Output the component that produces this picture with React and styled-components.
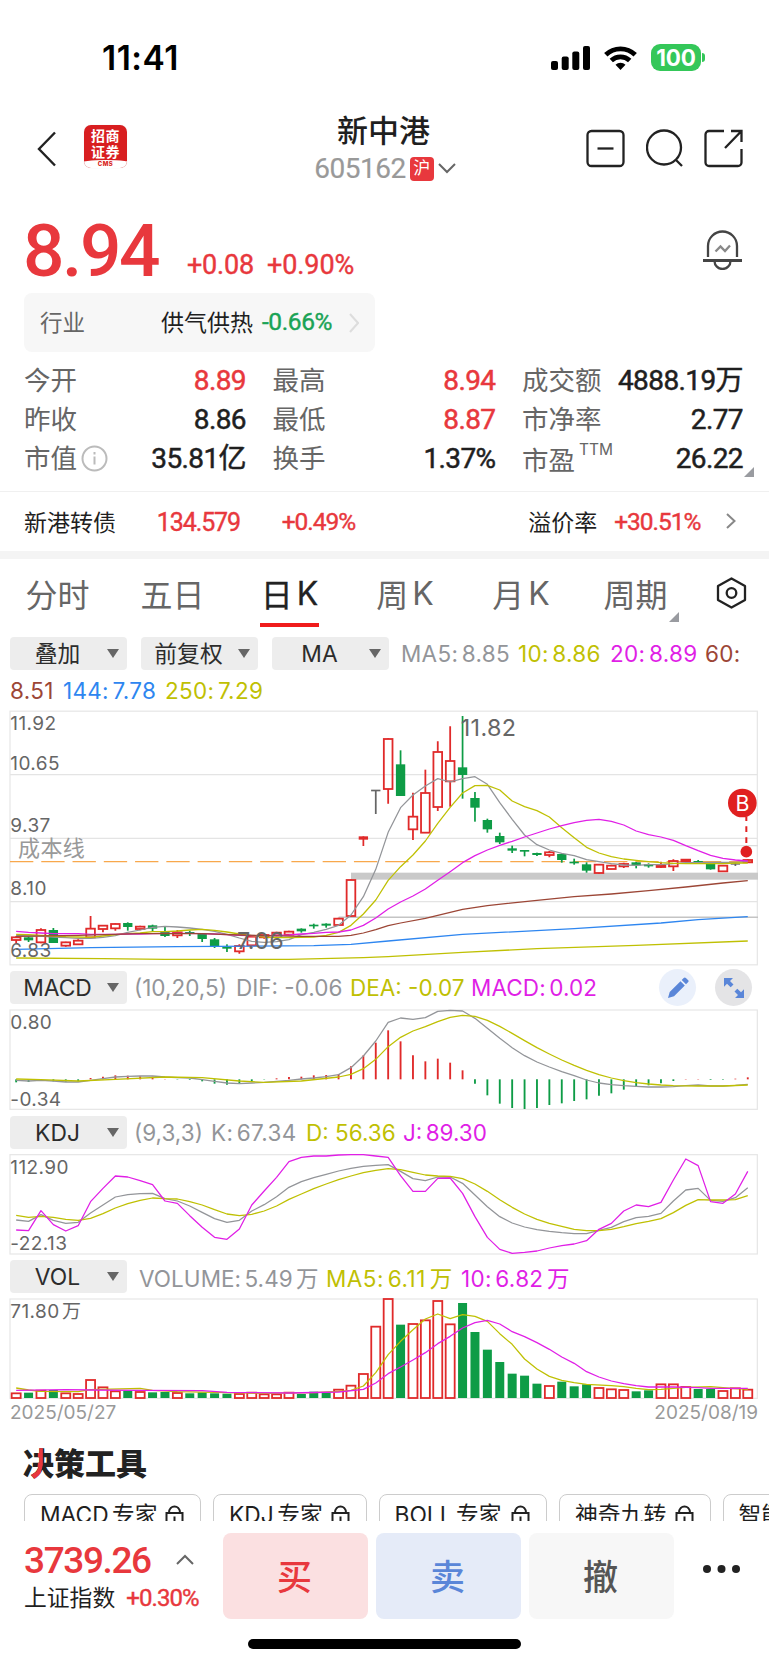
import React from "react";
import styled, { createGlobalStyle, css } from "styled-components";

const RED = "#e8383d";
const UP = "#e02a2a";
const DOWN = "#0e9c46";
const GRAY = "#939599";
const OLIVE = "#bfc003";
const PINK = "#e01fe6";
const BROWN = "#9c4636";
const BLUE = "#2e86f0";

const GlobalStyle = createGlobalStyle`
    * {
        box-sizing: border-box;
    }

    body {
        margin: 0;
        background: #fff;
        font-family: Inter, "Noto Sans CJK SC", sans-serif;
        color: #1f1f1f;
    }

    svg {
        display: block;
        flex: none;
    }
`;

const Page = styled.div`
    width: 769px;
    height: 1665px;
    overflow: hidden;
    background: #fff;
    display: flex;
    flex-direction: column;
    white-space: nowrap;
`;

const Num = styled.span`
    font-family: Roboto, "Noto Sans CJK SC", sans-serif;
    font-size: ${({ $size }) => $size || 25}px;
    font-weight: ${({ $weight }) => $weight || 400};
    letter-spacing: ${({ $track }) => $track || 0}px;
    color: ${({ $color }) => $color || "#1f1f1f"};
    -webkit-text-stroke: ${({ $stroke = 0.4 }) => $stroke}px currentColor;
    line-height: 1;
    padding-top: ${({ $drop }) => $drop || 0}px;
`;

/* status bar */

const StatusBar = styled.div`
    height: 100px;
    padding: 15px 64px 0 102px;
    display: flex;
    align-items: center;
`;

const Clock = styled.div`
    flex: 1;
    font-size: 33.5px;
    font-weight: 600;
    letter-spacing: 0.5px;
    color: #000;
`;

const StatusIcons = styled.div`
    display: flex;
    align-items: center;
    gap: 14px;
`;

const Battery = styled.div`
    display: flex;
    align-items: center;
    gap: 1px;
`;

const BatteryBody = styled.div`
    width: 50px;
    height: 27px;
    border-radius: 9px;
    background: #34c759;
    color: #fff;
    font-size: 22.5px;
    font-weight: 700;
    letter-spacing: -0.2px;
    line-height: 27px;
    text-align: center;
`;

const BatteryTip = styled.div`
    width: 3px;
    height: 9px;
    border-radius: 0 3px 3px 0;
    background: #34c759;
`;

/* title bar */

const Header = styled.div`
    height: 100px;
    padding: 0 26px 4px 37px;
    display: grid;
    grid-template-columns: 146px 1fr 157px;
    align-items: center;
`;

const HeaderLeft = styled.div`
    display: flex;
    align-items: center;
    gap: 28px;
    padding-top: 1px;
`;

const Logo = styled.div`
    width: 43px;
    height: 43px;
    margin-top: -5px;
    border-radius: 7px;
    background: #d81e20;
    overflow: hidden;
    display: flex;
    flex-direction: column;
    align-items: center;
    box-shadow: 0 0 1px #ddd;
    color: #fff;
    font-size: 14px;
    font-weight: 700;
    line-height: 16px;
    letter-spacing: 0.5px;
    padding-top: 3px;
`;

const LogoFoot = styled.div`
    width: 52px;
    height: 10px;
    border-radius: 50% 50% 0 0 / 3px 3px 0 0;
    background: #fff;
    color: #d81e20;
    font-size: 6px;
    font-weight: 800;
    line-height: 8px;
    text-align: center;
`;

const StockTitle = styled.div`
    display: flex;
    flex-direction: column;
    align-items: center;
    padding-left: 1px;
`;

const StockName = styled.div`
    font-size: 31px;
    font-weight: 500;
    line-height: 38px;
    margin: -3px 0 6px;
    padding-right: 3px;
`;

const StockCode = styled.div`
    display: flex;
    align-items: center;
    height: 25px;
    gap: 4px;
`;

const Market = styled.span`
    width: 24px;
    height: 24px;
    border-radius: 4px;
    background: ${RED};
    color: #fff;
    font-size: 17px;
    line-height: 23px;
    text-align: center;
`;

const HeaderIcons = styled.div`
    display: flex;
    justify-content: space-between;
    align-items: center;
`;

/* quote */

const PriceRow = styled.div`
    height: 93px;
    padding: 0 27px 0 23px;
    display: flex;
    align-items: flex-start;
`;

const Price = styled(Num)`
    width: 164px;
`;

const Change = styled(Num)`
    width: ${({ $w }) => $w}px;
`;

const BellBox = styled.div`
    margin-left: auto;
    padding-top: 30px;
`;

const Industry = styled.div`
    width: 351px;
    height: 59px;
    margin-left: 24px;
    padding: 0 16px 3px;
    border-radius: 8px;
    background: #f7f7f7;
    display: flex;
    align-items: center;
    font-size: 23px;
`;

const IndustryLabel = styled.span`
    width: 121px;
    color: #666;
    font-size: 22.5px;
`;

const IndustryName = styled.span`
    width: 101px;
`;

const IndustryArrow = styled.span`
    margin-left: auto;
    padding-top: 3px;
`;

const Stats = styled.div`
    height: 139px;
    padding: 9px 25px 0 24px;
    display: grid;
    grid-template-columns: 222px 223px 221px;
    column-gap: 26.5px;
    grid-auto-rows: 39px;
    position: relative;
`;

const Stat = styled.div`
    display: flex;
    align-items: center;
    justify-content: space-between;
`;

const StatLabel = styled.span`
    display: flex;
    align-items: center;
    gap: 4px;
    color: #666;
    font-size: 26.5px;
    line-height: 39px;
    padding-top: ${({ $drop }) => $drop || 0}px;
`;

const Ttm = styled.sup`
    align-self: flex-start;
    font-size: 15.5px;
    line-height: 17px;
`;

const Corner = styled.i`
    position: absolute;
    right: ${({ $right }) => $right}px;
    bottom: ${({ $bottom }) => $bottom}px;
    border-left: 10px solid transparent;
    border-bottom: 10px solid #999ba0;
`;

const BondRow = styled.div`
    height: 60px;
    border-top: 1px solid #f0f0f0;
    padding: 0 33px 2px 24px;
    display: flex;
    align-items: center;
    font-size: 23px;
`;

const BondCell = styled.div`
    width: ${({ $w }) => $w}px;
    display: flex;
    align-items: center;
`;

const Band = styled.div`
    height: 8px;
    background: #f4f4f4;
`;

/* period tabs */

const Tabs = styled.div`
    height: 78px;
    display: grid;
    grid-template-columns: 115px 115px 117px 115px 116px 115px 1fr;
`;

const Tab = styled.div`
    position: relative;
    height: 72px;
    padding: 0 0 4px ${({ $shift }) => $shift || 0}px;
    display: flex;
    align-items: center;
    justify-content: center;
    gap: 4px;
    font-size: 32px;
    color: ${({ $active }) => ($active ? "#222" : "#666")};

    ${({ $active }) =>
        $active &&
        css`
            -webkit-text-stroke: 0.3px currentColor;

            &::after {
                content: "";
                position: absolute;
                left: 30px;
                bottom: 4px;
                width: 59px;
                height: 4px;
                background: #f01c1c;
            }
        `}
`;

/* indicator header rows */

const Toolbar = styled.div`
    height: ${({ $h }) => $h || 33}px;
    margin: ${({ $margin }) => $margin || "6px 0"};
    padding: 0 10px;
    display: flex;
    align-items: center;
`;

const Pill = styled.div`
    width: 117px;
    height: 33px;
    flex: none;
    margin-right: ${({ $mr }) => $mr}px;
    padding: 0 8px 0 7px;
    border-radius: 4px;
    background: #ededed;
    color: #2c2c2c;
    font-size: 22.8px;
    line-height: 33px;
    display: flex;
    align-items: center;

    span {
        flex: 1;
        text-align: center;
        padding-right: 9px;
    }
`;

const Caret = styled.i`
    border: 6px solid transparent;
    border-top: 9px solid #666;
    border-bottom: 0;
`;

const Legend = styled.span`
    width: ${({ $w }) => $w}px;
    flex: none;
    font-size: 22.5px;
    color: ${({ $color }) => $color};

    ${({ $tight, $track = 0.3 }) =>
        $tight &&
        css`
            letter-spacing: ${$track}px;
            word-spacing: -3px;
        `}
`;

const RoundButton = styled.div`
    width: 37px;
    height: 37px;
    flex: none;
    border-radius: 50%;
    background: ${({ $bg }) => $bg};
    margin-left: ${({ $ml }) => $ml};
    margin-right: ${({ $mr }) => $mr || 0}px;
    display: flex;
    align-items: center;
    justify-content: center;
`;

const ChartBox = styled.div`
    flex: none;
    width: 749px;
    height: ${({ $h }) => $h}px;
    margin-left: 9px;

    svg {
        width: 749px;
        height: ${({ $h }) => $h}px;
    }
`;

const Label = styled.text`
    fill: ${({ $fill }) => $fill || "#666"};
    font-size: ${({ $size }) => $size || 57}px;
    letter-spacing: 1.2px;
    word-spacing: -10px;
`;

const Dates = styled.div`
    height: 30px;
    padding: 0 11px 0 10px;
    display: flex;
    justify-content: space-between;
    font-size: 19px;
    line-height: 28px;
    color: #999;
`;

/* tools */

const ToolsTitle = styled.h2`
    margin: 0;
    height: 65px;
    padding: 13px 23px 0;
    font-size: 31px;
    font-weight: 900;
    line-height: 44px;
    color: #222;
`;

const AccentChar = styled.span`
    position: relative;
    display: inline-block;
    height: 44px;
    vertical-align: top;

    &::after {
        content: "决";
        position: absolute;
        left: 0;
        top: 0;
        color: ${RED};
        clip-path: polygon(48% 0, 64% 0, 64% 52%, 57% 72%, 42% 92%, 26% 92%, 26% 74%, 45% 66%, 48% 50%);
    }
`;

const Cards = styled.div`
    height: 27px;
    overflow: hidden;
    padding-left: 24px;
    display: flex;
    gap: 12px;
`;

const Card = styled.div`
    width: ${({ $w }) => $w}px;
    height: 58px;
    flex: none;
    padding: 0 16px 0 15px;
    border: 1px solid #ccc;
    border-radius: 8px;
    font-size: 22.8px;
    line-height: 39px;
    word-spacing: -3px;
    display: flex;
    justify-content: space-between;

    svg {
        margin-top: 10px;
    }
`;

/* bottom bar */

const BottomBar = styled.div`
    height: 98px;
    padding: 12px 28px 0 24px;
    display: flex;
    align-items: flex-start;
    background: #fff;
`;

const Index = styled.div`
    width: 199px;
    height: 86px;
`;

const IndexTop = styled.div`
    display: flex;
    align-items: center;
    height: 53px;
    gap: 25px;
`;

const IndexBottom = styled.div`
    display: flex;
    align-items: center;
    gap: 11px;
    font-size: 22.8px;
    line-height: 20px;
`;

const TradeButton = styled.div`
    width: 145px;
    height: 86px;
    margin-right: 8px;
    padding-right: 2px;
    border-radius: 8px;
    background: ${({ $bg }) => $bg};
    color: ${({ $color }) => $color};
    font-size: 35px;
    font-weight: 500;
    line-height: 89px;
    text-align: center;
`;

const More = styled.div`
    width: 38px;
    margin: 32px 0 0 auto;
`;

const HomeBar = styled.div`
    width: 273px;
    height: 10px;
    margin: 20px 0 0 248px;
    border-radius: 5px;
    background: #000;
`;

/* series are stored in chart units, three per css pixel */

const STEP = 37.2;
const xAt = (i) => 48.5 + STEP * i;

// [up/down, high, body top, body bottom, low]
const CANDLES = [
    ["r", 708, 712, 720, 732], ["g", 708, 713, 720, 726], ["r", 685, 690, 727, 730],
    ["g", 684, 691, 728, 728], ["r", 725, 727, 737, 740], ["r", 718, 722, 733, 735],
    ["r", 648, 686, 712, 714], ["r", 675, 677, 687, 697], ["r", 670, 672, 685, 692],
    ["g", 667, 670, 680, 692], ["r", 677, 680, 687, 691], ["g", 674, 677, 685, 693],
    ["g", 680, 696, 707, 711], ["r", 690, 697, 706, 714], ["g", 692, 697, 700, 708],
    ["g", 700, 702, 716, 726], ["g", 714, 719, 737, 744], ["g", 733, 742, 745, 756],
    ["r", 733, 738, 754, 761], ["r", 705, 710, 736, 738], ["r", 700, 705, 712, 716],
    ["r", 695, 698, 706, 709], ["r", 692, 695, 704, 706], ["g", 685, 687, 693, 698],
    ["g", 671, 675, 678, 686], ["g", 670, 672, 676, 683], ["r", 653, 656, 675, 677],
    ["r", 538, 540, 648, 650], ["f", 409, 410, 418, 438], ["k", 270, 270, 273, 342],
    ["r", 115, 117, 267, 311], ["g", 151, 194, 287, 287], ["r", 278, 350, 388, 420],
    ["r", 209, 279, 398, 398], ["r", 124, 156, 321, 333], ["r", 79, 183, 244, 320],
    ["g", 48, 203, 224, 296], ["g", 276, 295, 322, 365], ["g", 356, 361, 387, 398],
    ["g", 398, 409, 426, 432], ["g", 437, 446, 451, 459], ["g", 450, 451, 454, 469],
    ["g", 458, 460, 464, 468], ["r", 453, 457, 465, 472], ["g", 460, 463, 479, 488],
    ["g", 476, 486, 489, 494], ["g", 487, 494, 511, 518], ["r", 492, 494, 519, 521],
    ["r", 494, 497, 507, 508], ["r", 488, 492, 499, 504], ["g", 486, 488, 495, 505],
    ["g", 490, 494, 498, 503], ["r", 485, 497, 501, 504], ["r", 478, 483, 499, 513],
    ["r", 477, 479, 484, 486], ["g", 480, 484, 487, 490], ["g", 488, 490, 507, 509],
    ["r", 495, 497, 514, 516], ["k", 490, 491, 493, 498], ["r", 478, 480, 487, 489],
];

const MA5 = [706, 708, 708, 711, 713, 715, 715, 712, 707, 697, 690, 682, 679, 681, 684, 688, 694, 703, 714, 724, 727, 725, 719, 704, 697, 688, 676, 645, 590, 508, 397, 323, 285, 258, 236, 246, 236, 230, 253, 308, 358, 405, 434, 450, 460, 467, 479, 485, 491, 495, 496, 494, 494, 491, 488, 488, 487, 487, 487, 484];
const MA10 = [703, 704, 706, 708, 710, 711, 712, 708, 704, 701, 699, 695, 695, 693, 690, 688, 691, 696, 702, 707, 711, 713, 713, 712, 711, 706, 697, 676, 642, 600, 541, 500, 465, 423, 370, 322, 279, 257, 256, 270, 303, 320, 332, 351, 383, 413, 442, 459, 470, 477, 481, 485, 488, 490, 491, 491, 491, 491, 489, 489];
const MA20 = [694, 697, 699, 701, 701, 701, 703, 703, 703, 702, 702, 701, 700, 700, 700, 701, 702, 704, 706, 707, 707, 706, 705, 702, 700, 697, 696, 690, 676, 654, 627, 606, 588, 567, 541, 515, 488, 467, 450, 436, 424, 411, 399, 387, 377, 368, 361, 358, 364, 375, 393, 404, 411, 421, 437, 452, 466, 475, 480, 483];
const MA60 = [[0, 709], [5, 706], [10, 701], [15, 701], [18, 705], [23, 709], [26, 709], [27, 706], [28, 699], [29, 689], [30, 677], [31, 669], [33, 655], [36, 628], [38, 617], [42, 601], [45, 590], [48, 582], [51, 572], [54, 561], [57, 549], [59, 542]];
const MA144 = [[0, 748], [6, 743], [13, 740], [24, 737], [27, 733], [30, 723], [36, 703], [45, 686], [52, 669], [55, 659], [59, 650]];
const MA250 = [[0, 774], [7, 776], [12, 778], [22, 778], [28, 773], [30, 770], [36, 757], [42, 746], [50, 736], [59, 723]];

const MACD_BARS = [367, 366, 360, 364, 365, 364, 354, 350, 346, 347, 349, 350, 357, 359, 360, 364, 371, 374, 371, 364, 359, 355, 351, 350, 346, 345, 342, 319, 286, 248, 211, 244, 286, 304, 296, 308, 331, 371, 406, 431, 444, 447, 444, 435, 430, 423, 418, 407, 400, 389, 381, 376, 370, 363, 357, 357, 360, 359, 356, 352];
const DIF = [361, 363, 361, 363, 366, 366, 361, 356, 351, 349, 348, 348, 351, 353, 354, 359, 364, 369, 371, 369, 367, 364, 361, 357, 354, 350, 344, 323, 288, 243, 187, 174, 178, 173, 154, 151, 153, 175, 205, 235, 263, 287, 306, 321, 335, 347, 360, 369, 374, 377, 379, 381, 381, 380, 377, 375, 378, 378, 376, 373];
const DEA = [[0, 357], [2, 359], [5, 363], [8, 358], [12, 351], [15, 353], [18, 363], [20, 367], [23, 363], [26, 351], [27, 343], [28, 326], [29, 298], [30, 260], [31, 232], [32, 213], [33, 200], [34, 185], [35, 172], [36, 166], [37, 169], [38, 181], [39, 199], [40, 220], [41, 242], [42, 263], [43, 282], [44, 300], [45, 316], [46, 331], [47, 344], [48, 354], [49, 362], [50, 368], [51, 372], [52, 375], [53, 377], [55, 378], [57, 378], [59, 375]];

const K = [780, 784, 764, 781, 790, 787, 759, 735, 711, 704, 701, 700, 716, 723, 738, 757, 776, 787, 781, 753, 734, 710, 682, 665, 653, 643, 633, 625, 619, 616, 614, 634, 656, 662, 651, 651, 670, 705, 740, 770, 789, 801, 809, 814, 818, 821, 821, 811, 802, 785, 773, 769, 760, 723, 690, 685, 721, 724, 713, 683];
const D = [766, 772, 769, 772, 778, 781, 775, 761, 744, 731, 721, 714, 716, 717, 725, 735, 749, 762, 767, 763, 753, 738, 718, 702, 686, 672, 659, 648, 638, 631, 626, 629, 637, 645, 648, 649, 656, 672, 694, 719, 742, 762, 778, 790, 799, 808, 812, 812, 808, 800, 791, 784, 776, 758, 736, 719, 720, 720, 719, 707];
const J = [810, 812, 752, 794, 813, 797, 725, 685, 648, 651, 662, 674, 723, 730, 767, 802, 832, 838, 807, 735, 693, 652, 605, 592, 588, 588, 585, 584, 584, 588, 592, 647, 694, 694, 655, 654, 700, 770, 832, 868, 880, 877, 873, 864, 857, 852, 842, 808, 790, 753, 735, 740, 727, 660, 597, 617, 725, 730, 702, 634];

const VOLS = [611, 609, 603, 601, 611, 613, 571, 593, 605, 604, 607, 608, 607, 610, 611, 608, 611, 612, 613, 609, 614, 614, 609, 613, 606, 608, 600, 588, 553, 411, 328, 405, 403, 392, 334, 404, 340, 427, 480, 517, 552, 558, 582, 589, 576, 590, 584, 595, 599, 601, 605, 602, 584, 584, 592, 598, 598, 604, 596, 600];
const VMA5 = [[0, 595], [1, 601], [2, 605], [5, 606], [6, 600], [10, 596], [11, 602], [13, 606], [16, 608], [20, 611], [24, 609], [26, 605], [27, 602], [28, 589], [29, 549], [30, 495], [31, 455], [32, 420], [33, 388], [34, 373], [35, 387], [36, 375], [37, 380], [38, 395], [39, 432], [40, 464], [41, 508], [42, 538], [43, 560], [44, 572], [45, 579], [46, 584], [48, 588], [49, 591], [50, 596], [51, 600], [52, 599], [53, 596], [54, 593], [56, 591], [57, 594], [59, 599]];
const VMA10 = [[0, 602], [4, 600], [6, 601], [10, 602], [15, 603], [17, 608], [22, 610], [26, 607], [28, 599], [29, 580], [30, 552], [31, 532], [32, 511], [33, 489], [34, 462], [35, 440], [36, 415], [37, 399], [38, 392], [39, 403], [40, 426], [41, 441], [42, 459], [43, 479], [44, 502], [45, 521], [46, 546], [47, 562], [48, 574], [49, 582], [50, 588], [51, 592], [53, 592], [55, 594], [56, 596], [59, 596]];

const Line = ({ data, color, width = 3.8 }) => (
    <polyline
        fill="none"
        stroke={color}
        strokeWidth={width}
        strokeLinejoin="round"
        points={data
            .map((d, i) => (Array.isArray(d) ? `${xAt(d[0])},${d[1]}` : `${xAt(i)},${d}`))
            .join(" ")}
    />
);

const Frame = ({ top, height }) => (
    <rect x="30" y={top} width="2242" height={height} fill="none" stroke="#e6e6e6" strokeWidth="3.6" />
);

const Candle = ({ i, data }) => {
    const [kind, high, top, bottom, low] = data;
    const x = xAt(i);
    if (kind === "r") {
        return (
            <g stroke={UP} strokeWidth="5.4" fill="none">
                <path d={`M${x} ${high}V${top}M${x} ${bottom}V${low}`} />
                <rect x={x - 13} y={top} width="26" height={bottom - top} />
            </g>
        );
    }
    const color = { g: DOWN, f: UP, k: "#666" }[kind];
    return (
        <g fill={color}>
            <rect x={x - 2.6} y={high} width="5.2" height={low - high} />
            <rect x={x - 14} y={top - 1} width="28" height={bottom - top + 2} />
        </g>
    );
};

const PriceChart = () => (
    <ChartBox $h={256}>
        <svg viewBox="27 30 2247 768">
            <path d="M30 224H2274M30 415H2274M30 605H2274" stroke="#e4e4e4" strokeWidth="3.6" />
            <Frame top={33.5} height={761} />
            <path d="M1500 437H2274" stroke="#dcdcdc" strokeWidth="3.6" />
            <rect x="1053" y="518" width="1221" height="21" fill="#c9c9c9" />
            <path d="M1016 652H2274" stroke="#c4c4c4" strokeWidth="4.5" />
            <path d="M30 485H2274" stroke="#f8a84c" strokeWidth="3.6" strokeDasharray="70 23.8" />
            {CANDLES.map((c, i) => (
                <Candle key={i} i={i} data={c} />
            ))}
            <Line data={MA5} color={GRAY} />
            <Line data={MA10} color={OLIVE} />
            <Line data={MA20} color={PINK} />
            <Line data={MA60} color={BROWN} />
            <Line data={MA144} color={BLUE} />
            <Line data={MA250} color={OLIVE} />
            <Label x="31" y="90">11.92</Label>
            <Label x="31" y="209">10.65</Label>
            <Label x="31" y="396">9.37</Label>
            <Label x="31" y="584">8.10</Label>
            <Label x="31" y="771">6.83</Label>
            <Label x="54" y="467" $size={66} $fill="#999">成本线</Label>
            <Label x="711" y="748" $size={70}>7.06</Label>
            <Label x="1382" y="108" $size={70}>11.82</Label>
            <path d="M2239 350V438" stroke="#e02020" strokeWidth="6" strokeDasharray="17 16" strokeDashoffset="4" />
            <circle cx="2227" cy="309" r="43" fill="#e02020" />
            <circle cx="2239" cy="455" r="17.5" fill="#e02020" />
            <Label x="2228" y="333" textAnchor="middle" $size={64} $fill="#fff">B</Label>
        </svg>
    </ChartBox>
);

const MacdChart = () => (
    <ChartBox $h={101}>
        <svg viewBox="27 147 2247 303">
            <Frame top={150} height={298} />
            {MACD_BARS.map((y, i) => (
                <path key={i} d={`M${xAt(i)} 358V${y}`} stroke={y < 358 ? UP : DOWN} strokeWidth="5.6" />
            ))}
            <Line data={DIF} color={GRAY} />
            <Line data={DEA} color={OLIVE} />
            <Label x="31" y="207">0.80</Label>
            <Label x="31" y="437">-0.34</Label>
        </svg>
    </ChartBox>
);

const KdjChart = () => (
    <ChartBox $h={101}>
        <svg viewBox="27 582 2247 303">
            <Frame top={584} height={298} />
            <Line data={K} color={GRAY} />
            <Line data={D} color={OLIVE} />
            <Line data={J} color={PINK} />
            <Label x="31" y="641">112.90</Label>
            <Label x="31" y="871">-22.13</Label>
        </svg>
    </ChartBox>
);

const VolChart = () => (
    <ChartBox $h={101}>
        <svg viewBox="27 325 2247 303">
            <Frame top={328} height={298} />
            {VOLS.map((y, i) =>
                CANDLES[i][0] === "g" ? (
                    <rect key={i} x={xAt(i) - 13.5} y={y} width="27" height={625 - y} fill={DOWN} />
                ) : (
                    <rect key={i} x={xAt(i) - 13.5} y={y} width="27" height={625 - y} fill="none" stroke={UP} strokeWidth="5.4" />
                )
            )}
            <Line data={VMA5} color={OLIVE} />
            <Line data={VMA10} color={PINK} />
            <Label x="31" y="384">71.80 万</Label>
        </svg>
    </ChartBox>
);

const Chevron = ({ w, h, d, color, stroke = 2 }) => (
    <svg width={w} height={h} viewBox={`0 0 ${w} ${h}`} fill="none" stroke={color} strokeWidth={stroke}>
        <path d={d} />
    </svg>
);

const Lock = () => (
    <svg width="19" height="22" viewBox="0 0 19 22" fill="none" stroke="#222" strokeWidth="2">
        <path d="M1.5 8h16v12.5h-16zM4 8C4 3.5 7 1.5 9.5 1.5S15 3.5 15 8M9.5 11.5v5" />
    </svg>
);

const STATS = [
    ["今开", "8.89", RED], ["最高", "8.94", RED], ["成交额", "4888.19万"],
    ["昨收", "8.86"], ["最低", "8.87", RED], ["市净率", "2.77"],
    ["市值", "35.81亿"], ["换手", "1.37%"], ["市盈", "26.22"],
];

const App = () => (
    <Page>
        <GlobalStyle />
        <StatusBar>
            <Clock>11:41</Clock>
            <StatusIcons>
                <svg width="39" height="24" viewBox="0 0 39 24">
                    <rect x="0" y="15" width="7" height="9" rx="2" />
                    <rect x="10.7" y="10.5" width="7" height="13.5" rx="2" />
                    <rect x="21.3" y="5.5" width="7" height="18.5" rx="2" />
                    <rect x="32" y="0" width="7" height="24" rx="2" />
                </svg>
                <svg width="33" height="24" viewBox="0 0 33 24" fill="none" stroke="#000" strokeWidth="4.8">
                    <path d="M1.8 8.8a21 21 0 0 1 29.4 0M7.3 14.6a13.3 13.3 0 0 1 18.4 0" />
                    <path d="M16.5 24l-5-5.2a7.2 7.2 0 0 1 10 0z" fill="#000" stroke="none" />
                </svg>
                <Battery>
                    <BatteryBody>100</BatteryBody>
                    <BatteryTip />
                </Battery>
            </StatusIcons>
        </StatusBar>

        <Header>
            <HeaderLeft>
                <Chevron w={19} h={36} d="M18 1.5L2 18L18 34.5" color="#222" stroke={2.4} />
                <Logo>
                    <span>招商</span>
                    <span>证券</span>
                    <LogoFoot>CMS</LogoFoot>
                </Logo>
            </HeaderLeft>
            <StockTitle>
                <StockName>新中港</StockName>
                <StockCode>
                    <Num $size={28} $color="#999" $track={-0.5} $stroke={0.2}>605162</Num>
                    <Market>沪</Market>
                    <Chevron w={18} h={11} d="M1 1L9 9L17 1" color="#666" />
                </StockCode>
            </StockTitle>
            <HeaderIcons>
                <svg width="39" height="39" viewBox="0 0 39 39" fill="none" stroke="#222" strokeWidth="2.3">
                    <rect x="1.5" y="2" width="36" height="35" rx="4" />
                    <path d="M11.5 19.5h16" />
                </svg>
                <svg width="38" height="39" viewBox="0 0 38 39" fill="none" stroke="#222" strokeWidth="2.3">
                    <circle cx="18" cy="18.5" r="17" />
                    <path d="M29.5 30.5l6.5 6.5" />
                </svg>
                <svg width="39" height="39" viewBox="0 0 39 39" fill="none" stroke="#222" strokeWidth="2.3">
                    <path d="M20 2H5a3.5 3.5 0 0 0-3.5 3.5V33.5A3.5 3.5 0 0 0 5 37H34a3.5 3.5 0 0 0 3.5-3.5V20M27 2h10.5V13M37 2.5L21 19" />
                </svg>
            </HeaderIcons>
        </Header>

        <PriceRow>
            <Price $size={73} $weight={500} $track={-2.4} $color={RED} $stroke={0} $drop={15}>8.94</Price>
            <Change $w={80} $size={27} $track={-0.2} $color={RED} $drop={52}>+0.08</Change>
            <Change $w={90} $size={27} $track={-0.1} $color={RED} $drop={52}>+0.90%</Change>
            <BellBox>
                <svg width="39" height="40" viewBox="0 0 39 40" fill="none" stroke="#444" strokeWidth="2.3">
                    <path d="M5 27V16a14.5 14.5 0 0 1 29 0V27" />
                    <path d="M0 30.5H39" strokeWidth="3" />
                    <path d="M11.5 31a8 8 0 0 0 16 0" />
                    <path d="M12.5 21.5l5-5 4.5 4.5 5-5.5" stroke="#888" />
                </svg>
            </BellBox>
        </PriceRow>

        <Industry>
            <IndustryLabel>行业</IndustryLabel>
            <IndustryName>供气供热</IndustryName>
            <Num $size={24.5} $color="#1aa356" $track={-0.4} $drop={3}>-0.66%</Num>
            <IndustryArrow>
                <Chevron w={10} h={20} d="M1 1L9 10L1 19" color="#ddd" />
            </IndustryArrow>
        </Industry>

        <Stats>
            {STATS.map(([label, value, color]) => (
                <Stat key={label}>
                    <StatLabel $drop={label === "市盈" ? 4 : 0}>
                        {label}
                        {label === "市值" && (
                            <svg width="27" height="27" viewBox="0 0 27 27" fill="none" stroke="#bbb" strokeWidth="2">
                                <circle cx="13.5" cy="13.5" r="12" />
                                <path d="M13.5 11.5v8M13.5 7v2.5" />
                            </svg>
                        )}
                        {label === "市盈" && <Ttm>TTM</Ttm>}
                    </StatLabel>
                    <Num $size={28} $track={-0.6} $stroke={0.5} $color={color}>{value}</Num>
                </Stat>
            ))}
            <Corner $right={15} $bottom={14} />
        </Stats>

        <BondRow>
            <BondCell $w={133}>新港转债</BondCell>
            <BondCell $w={125}>
                <Num $size={25} $color={RED} $track={-1.1} $drop={3}>134.579</Num>
            </BondCell>
            <BondCell $w={247}>
                <Num $size={24.5} $color={RED} $track={-1} $drop={3}>+0.49%</Num>
            </BondCell>
            <BondCell $w={86}>溢价率</BondCell>
            <BondCell $w={112}>
                <Num $size={24.5} $color={RED} $track={-1} $drop={3}>+30.51%</Num>
            </BondCell>
            <Chevron w={10} h={16} d="M1 1L8.5 8L1 15" color="#888" />
        </BondRow>
        <Band />

        <Tabs>
            <Tab>分时</Tab>
            <Tab>五日</Tab>
            <Tab $active $shift={2}>
                日<span>K</span>
            </Tab>
            <Tab $shift={1}>
                周<span>K</span>
            </Tab>
            <Tab $shift={2}>
                月<span>K</span>
            </Tab>
            <Tab>
                周期
                <Corner $right={14} $bottom={9} />
            </Tab>
            <Tab>
                <svg width="31" height="32" viewBox="0 0 31 32" fill="none" stroke="#222" strokeWidth="2.3">
                    <path d="M15.5 1.5L29 9V23L15.5 30.5L2 23V9Z" strokeLinejoin="round" />
                    <circle cx="15.5" cy="16" r="4.8" />
                </svg>
            </Tab>
        </Tabs>

        <Toolbar $margin="0">
            <Pill $mr={14}>
                <span>叠加</span>
                <Caret />
            </Pill>
            <Pill $mr={14}>
                <span>前复权</span>
                <Caret />
            </Pill>
            <Pill $mr={12}>
                <span>MA</span>
                <Caret />
            </Pill>
            <Legend $w={117} $tight $color={GRAY}>MA5: 8.85</Legend>
            <Legend $w={92} $tight $color={OLIVE}>10: 8.86</Legend>
            <Legend $w={95} $tight $color={PINK}>20: 8.89</Legend>
            <Legend $w={40} $tight $color={BROWN}>60:</Legend>
        </Toolbar>
        <Toolbar $h={40} $margin="0">
            <Legend $w={53} $tight $color={BROWN}>8.51</Legend>
            <Legend $w={102} $tight $color={BLUE}>144: 7.78</Legend>
            <Legend $w={100} $tight $color={OLIVE}>250: 7.29</Legend>
        </Toolbar>
        <PriceChart />

        <Toolbar $margin="5px 0">
            <Pill $mr={7}>
                <span>MACD</span>
                <Caret />
            </Pill>
            <Legend $w={102} $color={GRAY}>(10,20,5)</Legend>
            <Legend $w={114} $color={GRAY}>DIF: -0.06</Legend>
            <Legend $w={121} $color={OLIVE}>DEA: -0.07</Legend>
            <Legend $w={126} $tight $track={0.1} $color={PINK}>MACD: 0.02</Legend>
            <RoundButton $bg="#eaf0fb" $ml="auto" $mr={19}>
                <svg width="22" height="22" viewBox="0 0 22 22" fill="#5a86d8">
                    <path d="M1 21l1.7-6L13.5 4.2l4.3 4.3L7 19.3zM14.7 3l2-2a1.5 1.5 0 0 1 2.2 0L21 3.1a1.5 1.5 0 0 1 0 2.2l-2 2z" />
                </svg>
            </RoundButton>
            <RoundButton $bg="#e4e4e6" $mr={7}>
                <svg width="22" height="22" viewBox="0 0 22 22" fill="#5a86d8">
                    <path d="M1 1h9L7 4l3.5 3.5-2.8 2.8L4 6.8l-3 3zM21 21h-9l3-3-3.5-3.5 2.8-2.8 3.7 3.5 3-3z" />
                </svg>
            </RoundButton>
        </Toolbar>
        <MacdChart />

        <Toolbar $margin="6px 0 5px">
            <Pill $mr={7}>
                <span>KDJ</span>
                <Caret />
            </Pill>
            <Legend $w={77} $color={GRAY}>(9,3,3)</Legend>
            <Legend $w={95} $tight $color={GRAY}>K: 67.34</Legend>
            <Legend $w={97} $color={OLIVE}>D: 56.36</Legend>
            <Legend $w={90} $tight $track={0} $color={PINK}>J: 89.30</Legend>
        </Toolbar>
        <KdjChart />

        <Toolbar $margin="5px 0">
            <Pill $mr={12}>
                <span>VOL</span>
                <Caret />
            </Pill>
            <Legend $w={187} $tight $track={0.05} $color={GRAY}>VOLUME: 5.49 万</Legend>
            <Legend $w={135} $tight $track={0.5} $color={OLIVE}>MA5: 6.11 万</Legend>
            <Legend $w={110} $tight $color={PINK}>10: 6.82 万</Legend>
        </Toolbar>
        <VolChart />
        <Dates>
            <span>2025/05/27</span>
            <span>2025/08/19</span>
        </Dates>

        <ToolsTitle>
            <AccentChar>决</AccentChar>策工具
        </ToolsTitle>
        <Cards>
            <Card $w={177}>MACD 专家<Lock /></Card>
            <Card $w={153.5}>KDJ 专家<Lock /></Card>
            <Card $w={168.5}>BOLL 专家<Lock /></Card>
            <Card $w={151.5}>神奇九转<Lock /></Card>
            <Card $w={152}>智能选股</Card>
        </Cards>

        <BottomBar>
            <Index>
                <IndexTop>
                    <Num $size={37} $weight={500} $color={RED} $track={-1.4} $stroke={0} $drop={2}>3739.26</Num>
                    <Chevron w={18} h={11} d="M1 10L9 2L17 10" color="#666" />
                </IndexTop>
                <IndexBottom>
                    上证指数
                    <Num $size={24} $color={RED} $track={-0.9}>+0.30%</Num>
                </IndexBottom>
            </Index>
            <TradeButton $bg="#fbe0e1" $color={RED}>买</TradeButton>
            <TradeButton $bg="#e5ebf8" $color="#5a86d8">卖</TradeButton>
            <TradeButton $bg="#f7f7f7" $color="#555">撤</TradeButton>
            <More>
                <svg width="38" height="8" viewBox="0 0 38 8" fill="#222">
                    <circle cx="4" cy="4" r="4" />
                    <circle cx="18.5" cy="4" r="4" />
                    <circle cx="33" cy="4" r="4" />
                </svg>
            </More>
        </BottomBar>
        <HomeBar />
    </Page>
);

export default App;
